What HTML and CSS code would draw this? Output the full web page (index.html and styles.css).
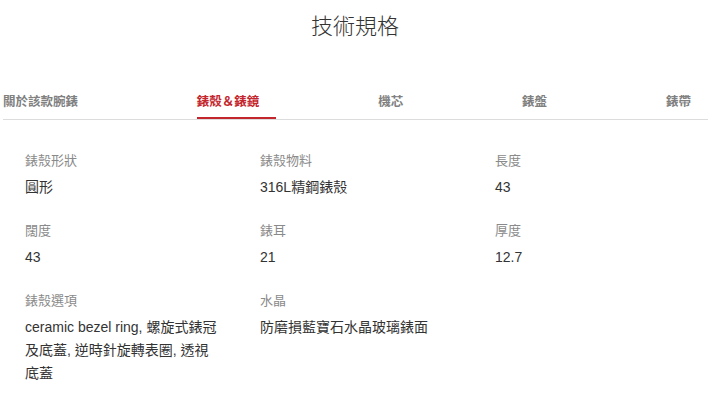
FILE: index.html
```html
<!DOCTYPE html>
<html lang="zh-Hant">
<head>
<meta charset="utf-8">
<title>技術規格</title>
<link rel="stylesheet" href="styles.css">
</head>
<body>
<h1 class="title">技術規格</h1>
<nav class="tabs">
  <div class="tab">關於該款腕錶</div>
  <div class="tab active">錶殼＆錶鏡</div>
  <div class="tab">機芯</div>
  <div class="tab">錶盤</div>
  <div class="tab">錶帶</div>
</nav>
<div class="specs">
  <div class="spec"><div class="label">錶殼形狀</div><div class="value">圓形</div></div>
  <div class="spec"><div class="label">錶殼物料</div><div class="value">316L精鋼錶殼</div></div>
  <div class="spec"><div class="label">長度</div><div class="value">43</div></div>
  <div class="spec"><div class="label">闊度</div><div class="value">43</div></div>
  <div class="spec"><div class="label">錶耳</div><div class="value">21</div></div>
  <div class="spec"><div class="label">厚度</div><div class="value">12.7</div></div>
  <div class="spec"><div class="label">錶殼選項</div><div class="value">ceramic bezel ring, 螺旋式錶冠及底蓋, 逆時針旋轉表圈, 透視底蓋</div></div>
  <div class="spec"><div class="label">水晶</div><div class="value">防磨損藍寶石水晶玻璃錶面</div></div>
</div>
</body>
</html>
```
FILE: styles.css
```css
html, body {
  margin: 0;
  padding: 0;
  background: #fff;
}
body {
  font-family: "Liberation Sans", "Noto Sans CJK TC", sans-serif;
  color: #333;
}
.title {
  margin: 0;
  padding: 14px 10px 0 0;
  font-size: 22px;
  line-height: 26px;
  font-weight: 300;
  text-align: center;
  color: #333;
}
.tabs {
  display: flex;
  justify-content: space-between;
  margin: 53px 12px 0 3px;
  border-bottom: 1px solid #dcdcdc;
}
.tab {
  padding: 0 17px 8px 0;
  font-size: 12.5px;
  line-height: 18px;
  font-weight: 700;
  color: #808080;
}
.tab.active {
  color: #c4262e;
  box-shadow: inset 0 -2px 0 #c4262e;
}
.specs {
  display: grid;
  grid-template-columns: repeat(3, 235px);
  row-gap: 22px;
  padding: 31px 0 0 25px;
}
.label {
  font-size: 13px;
  line-height: 20px;
  color: #8a8a8a;
  margin-bottom: 5px;
}
.value {
  width: 195px;
  font-size: 14px;
  line-height: 23px;
  color: #333;
}
```
